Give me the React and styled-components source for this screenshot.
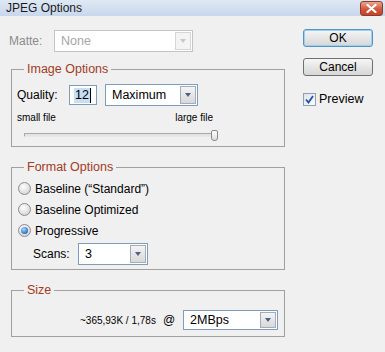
import React from 'react';
import styled, { createGlobalStyle } from 'styled-components';

const Global = createGlobalStyle`
  html, body { margin: 0; padding: 0; background: #f0f0f0; }
  body { font-family: "Liberation Sans", Arial, sans-serif; font-size: 12px; color: #000; }
  * { box-sizing: border-box; }
`;

const Window = styled.div`
  width: 385px;
  height: 352px;
  background: #f0f0f0;
  display: flex;
  flex-direction: column;
  overflow: hidden;
`;

const TitleBar = styled.div`
  height: 16px;
  display: flex;
  align-items: center;
  justify-content: space-between;
  padding: 0 2px 0 6px;
  background: linear-gradient(#dfe9f5, #c7d7ec);
  color: #1b1b1b;
  font-size: 12px;
`;

const CloseBtn = styled.div`
  width: 23px;
  height: 15px;
  border: 1px solid #8e3b2a;
  border-radius: 3px;
  background: linear-gradient(#eba58f, #d0573c 55%, #c2442a);
  display: flex;
  align-items: center;
  justify-content: center;
`;

const Body = styled.div`
  display: flex;
  flex: 1;
`;

const LeftCol = styled.div`
  width: 290px;
  display: flex;
  flex-direction: column;
  padding-top: 14px;
`;

const RightCol = styled.div`
  display: flex;
  flex-direction: column;
  padding: 13px 0 0 13px;
`;

const Button = styled.div`
  width: 70px;
  height: 18px;
  margin-bottom: ${p => p.$mb || 0}px;
  border: 1px solid ${p => (p.$default ? '#4f95c8' : '#707070')};
  box-shadow: ${p => (p.$default ? 'inset 0 0 0 1px #9fd0f0' : 'none')};
  border-radius: 3px;
  background: linear-gradient(#f6f6f6, #e6e6e6 50%, #d6d6d6);
  display: flex;
  align-items: center;
  justify-content: center;
  font-size: 12px;
  color: #000;
`;

const CheckRow = styled.div`
  display: flex;
  align-items: center;
  gap: 3px;
  margin-top: 16px;
  font-size: 12.5px;
`;

const CheckBox = styled.div`
  width: 13px;
  height: 13px;
  border: 1px solid #8f9fb5;
  background: linear-gradient(135deg, #dfe3ea, #fbfbfb);
  display: flex;
  align-items: center;
  justify-content: center;
`;

const Row = styled.div`
  display: flex;
  align-items: center;
  height: ${p => p.$h || 22}px;
  padding-left: ${p => p.$pl || 0}px;
  margin-top: ${p => p.$mt || 0}px;
  gap: ${p => p.$gap || 0}px;
`;

const Label = styled.span`
  width: ${p => p.$w}px;
  flex: none;
  color: ${p => (p.$disabled ? '#8c8c8c' : '#000')};
  font-size: ${p => p.$fs || 12}px;
`;

const SelectBox = styled.div`
  width: ${p => p.$w}px;
  height: ${p => p.$h || 22}px;
  flex: none;
  border: 1px solid ${p => (p.$disabled ? '#c4c4c4' : '#7f9db9')};
  background: #fff;
  display: flex;
  align-items: stretch;
  color: ${p => (p.$disabled ? '#a6a6a6' : '#000')};
  font-size: 12.5px;
`;

const SelectText = styled.span`
  flex: 1;
  display: flex;
  align-items: center;
  padding-left: 6px;
`;

const DropBtn = styled.div`
  width: 16px;
  flex: none;
  margin: 1px;
  border: 1px solid ${p => (p.$disabled ? '#d6d6d6' : '#a4acb8')};
  background: ${p => (p.$disabled ? '#f4f4f4' : 'linear-gradient(#f4f4f4, #d8d8d8)')};
  display: flex;
  align-items: center;
  justify-content: center;
`;

const Arrow = styled.div`
  width: 0;
  height: 0;
  border-left: 3.5px solid transparent;
  border-right: 3.5px solid transparent;
  border-top: 4px solid ${p => (p.$disabled ? '#c8c8c8' : '#4d6185')};
`;

const Select = ({ w, h, value, disabled }) => (
  <SelectBox $w={w} $h={h} $disabled={disabled}>
    <SelectText>{value}</SelectText>
    <DropBtn $disabled={disabled}>
      <Arrow $disabled={disabled} />
    </DropBtn>
  </SelectBox>
);

const Group = styled.fieldset`
  margin: ${p => p.$mt}px 0 0 11px;
  width: 274px;
  min-width: 0;
  border: 1px solid #a0a0a0;
  padding: ${p => p.$pt}px 0 ${p => p.$pb}px 0;
`;

const Legend = styled.legend`
  margin-left: 12px;
  padding: 0 3px;
  color: #a23c1f;
  font-size: 12.5px;
  line-height: 14px;
`;

const TextInput = styled.div`
  width: 28px;
  height: 20px;
  flex: none;
  border: 1px solid #7f9db9;
  background: #fff;
  display: flex;
  align-items: center;
  padding-left: 4px;
  margin-right: 8px;
  font-size: 12.5px;
`;

const Selected = styled.span`
  background: #c7def4;
  padding: 0 1px;
  line-height: 15px;
  border-right: 1px solid #000;
`;

const SliderLabels = styled.div`
  display: flex;
  justify-content: space-between;
  width: 201px;
  padding-left: 5px;
  margin-top: 6px;
  height: 11px;
  line-height: 11px;
  font-size: 10px;
`;

const SliderTrack = styled.div`
  margin: 7px 0 0 12px;
  width: 194px;
  height: 10px;
  display: flex;
  align-items: center;
  justify-content: flex-end;
  background: linear-gradient(#f0f0f0, #f0f0f0) ;
  position: relative;
`;

const TrackLine = styled.div`
  flex: 1;
  height: 4px;
  border: 1px solid #a8a8a8;
  border-bottom-color: #e8e8e8;
  border-right-color: #e8e8e8;
  background: #e4e4e4;
  border-radius: 1px;
  margin-right: -2px;
`;

const Thumb = styled.div`
  width: 7px;
  height: 11px;
  border: 1px solid #8a8a8a;
  border-radius: 2px 2px 3px 3px;
  background: linear-gradient(#ffffff, #dcdcdc);
  position: relative;
`;

const Radio = styled.div`
  width: 13px;
  height: 13px;
  flex: none;
  border-radius: 50%;
  border: 1px solid #8d8d8d;
  background: radial-gradient(circle at 40% 35%, #ffffff, #d4d4d4 80%);
  display: flex;
  align-items: center;
  justify-content: center;
`;

const RadioDot = styled.div`
  width: 7px;
  height: 7px;
  border-radius: 50%;
  background: radial-gradient(circle at 40% 35%, #a9d6ff, #2a73c0 70%, #1a4f8c);
`;

const SizeText = styled.span`
  font-size: 10px;
  margin-right: 7px;
`;

const At = styled.span`
  font-size: 12px;
  margin-right: 8px;
`;

export default function App() {
  return (
    <>
      <Global />
      <Window>
        <TitleBar>
          <span>JPEG Options</span>
          <CloseBtn>
            <svg width="11" height="9" viewBox="0 0 11 9">
              <path d="M1.5 1 L9.5 8 M9.5 1 L1.5 8" stroke="#fff" strokeWidth="2.2" strokeLinecap="round" />
            </svg>
          </CloseBtn>
        </TitleBar>
        <Body>
          <LeftCol>
            <Row $pl={9} $h={22}>
              <Label $w={45} $disabled>Matte:</Label>
              <Select w={139} h={22} value="None" disabled />
            </Row>

            <Group $mt={10} $pt={8} $pb={6}>
              <Legend>Image Options</Legend>
              <Row $pl={5} $h={22}>
                <Label $w={52}>Quality:</Label>
                <TextInput>
                  <Selected>12</Selected>
                </TextInput>
                <Select w={93} h={22} value="Maximum" />
              </Row>
              <SliderLabels>
                <span>small file</span>
                <span>large file</span>
              </SliderLabels>
              <SliderTrack>
                <TrackLine />
                <Thumb />
              </SliderTrack>
            </Group>

            <Group $mt={13} $pt={4} $pb={4}>
              <Legend>Format Options</Legend>
              <Row $pl={6} $h={21} $gap={4}>
                <Radio />
                <span>Baseline (“Standard”)</span>
              </Row>
              <Row $pl={6} $h={21} $gap={4}>
                <Radio />
                <span>Baseline Optimized</span>
              </Row>
              <Row $pl={6} $h={21} $gap={4}>
                <Radio>
                  <RadioDot />
                </Radio>
                <span>Progressive</span>
              </Row>
              <Row $pl={21} $h={22} $mt={2}>
                <Label $w={45}>Scans:</Label>
                <Select w={70} h={22} value="3" />
              </Row>
            </Group>

            <Group $mt={13} $pt={13} $pb={6}>
              <Legend>Size</Legend>
              <Row $pl={68} $h={20}>
                <SizeText>~365,93K / 1,78s</SizeText>
                <At>@</At>
                <Select w={95} h={20} value="2MBps" />
              </Row>
            </Group>
          </LeftCol>

          <RightCol>
            <Button $default $mb={11}>OK</Button>
            <Button>Cancel</Button>
            <CheckRow>
              <CheckBox>
                <svg width="9" height="9" viewBox="0 0 9 9">
                  <path d="M1 4.5 L3.5 7.5 L8 1" stroke="#2350a8" strokeWidth="1.8" fill="none" />
                </svg>
              </CheckBox>
              <span>Preview</span>
            </CheckRow>
          </RightCol>
        </Body>
      </Window>
    </>
  );
}
